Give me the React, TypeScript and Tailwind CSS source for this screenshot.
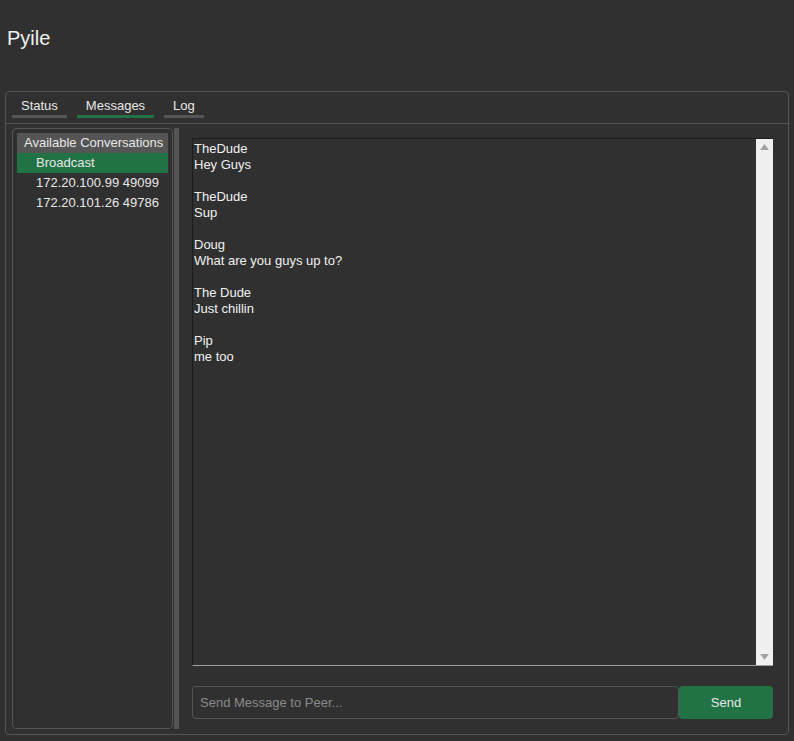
import React from 'react';

const messages = [
  { from: 'TheDude', text: 'Hey Guys' },
  { from: 'TheDude', text: 'Sup' },
  { from: 'Doug', text: 'What are you guys up to?' },
  { from: 'The Dude', text: 'Just chillin' },
  { from: 'Pip', text: 'me too' },
];

const peers = ['172.20.100.99 49099', '172.20.101.26 49786'];

function Tab({ label, active }: { label: string; active?: boolean }) {
  return (
    <div className="flex flex-col items-stretch">
      <div className="px-[9px] text-center text-[13px] leading-[17px] text-[#e8e8e8] pt-[5px]">{label}</div>
      <div className={`h-[3px] mt-[1px] ${active ? 'bg-[#217346]' : 'bg-[#555555]'}`} />
    </div>
  );
}

export default function App() {
  return (
    <div
      className="w-[794px] h-[741px] bg-[#303030] flex flex-col overflow-hidden"
      style={{ fontFamily: '"Liberation Sans", Arial, sans-serif' }}
    >
      <div className="h-[91px] pl-[7px] pt-[26px] text-[20px] leading-[24px] text-[#f0f0f0]">Pyile</div>

      <div className="mx-[5px] w-[784px] h-[644px] border border-[#555555] rounded-[4px] flex flex-col">
        <div className="flex gap-[10px] pl-[6px] h-[32px] border-b border-[#555555]">
          <Tab label="Status" />
          <Tab label="Messages" active />
          <Tab label="Log" />
        </div>

        <div className="flex flex-1 pt-[4px] pb-[5px] pl-[6px] pr-[15px]">
          <div className="w-[161px] border border-[#555555] rounded-[4px] p-[4px] flex flex-col text-[13px] leading-[20px] text-[#e8e8e8]">
            <div className="bg-[#555555] pl-[7px]">Available Conversations</div>
            <div className="bg-[#217346] pl-[19px]">Broadcast</div>
            {peers.map((p) => (
              <div key={p} className="pl-[19px]">
                {p}
              </div>
            ))}
          </div>

          <div className="w-[5px] ml-[1px] bg-[#555555]" />

          <div className="flex-1 flex flex-col pl-[13px] pt-[10px]">
            <div className="h-[528px] flex border-t border-l border-[#1c1c1c] border-b border-b-[#a0a0a0]">
              <div className="flex-1 px-[1px] pt-[2px] text-[13px] leading-[16px] text-[#f0f0f0]">
                {messages.map((m, i) => (
                  <div key={i} className="mb-[16px]">
                    <div>{m.from}</div>
                    <div>{m.text}</div>
                  </div>
                ))}
              </div>
              <div className="w-[17px] bg-[#f0f0f0] flex flex-col justify-between items-center py-[5px]">
                <svg width="9" height="6" viewBox="0 0 9 6">
                  <polygon points="4.5,0 9,6 0,6" fill="#a3a3a3" />
                </svg>
                <svg width="9" height="6" viewBox="0 0 9 6">
                  <polygon points="0,0 9,0 4.5,6" fill="#a3a3a3" />
                </svg>
              </div>
            </div>

            <div className="flex mt-[20px] h-[33px]">
              <input
                placeholder="Send Message to Peer..."
                className="flex-1 bg-transparent border border-[#555555] rounded-[4px] px-[7px] text-[13px] text-[#e8e8e8] placeholder:text-[#8a8a8a] outline-none"
              />
              <button className="w-[94px] bg-[#217346] rounded-[4px] text-[13px] text-[#e8e8e8]">Send</button>
            </div>
          </div>
        </div>
      </div>
    </div>
  );
}
